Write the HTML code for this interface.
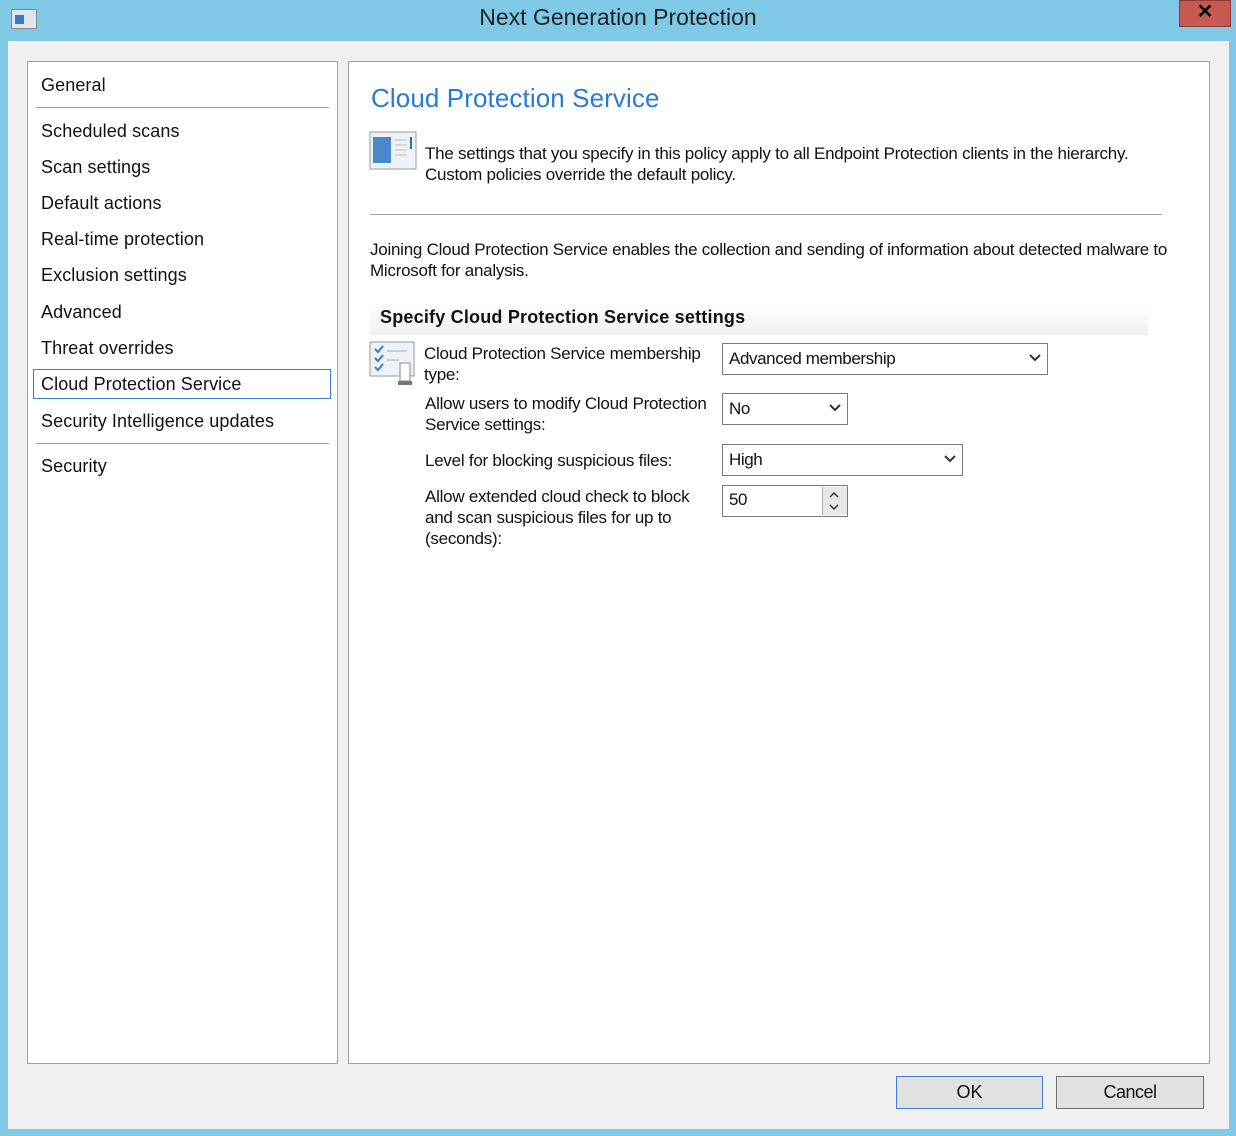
<!DOCTYPE html><html><head><style>
body{margin:0;width:1236px;height:1136px;background:#7fc8e6;font-family:"Liberation Sans",sans-serif;position:relative;overflow:hidden}
.a{position:absolute}
.t{font-size:17px;color:#111;letter-spacing:-0.25px;line-height:21px}
.nav{font-size:18px;color:#111;left:41px;letter-spacing:0.1px}
.dd{position:absolute;background:#fff;border:1px solid #7a7a7a;height:30px;box-sizing:border-box;font-size:17px;letter-spacing:-0.4px;padding:5px 6px;color:#111}
.dd svg{position:absolute;right:6px;top:10px}
</style></head><body>
<div class="a" style="left:11px;top:9px;width:24px;height:18px;border:1px solid #888;background:#dde6ee"><div class="a" style="left:3px;top:5px;width:9px;height:9px;background:#3a78c0"></div></div>
<div class="a" style="left:0;width:1236px;top:4px;text-align:center;font-size:23px;color:#222">Next Generation Protection</div>
<div class="a" style="left:1179px;top:0;width:52px;height:27px;background:#c75a50;border:1px solid #8a3a33;box-sizing:border-box;text-align:center;font-weight:bold;font-size:20px;line-height:22px">✕</div>
<div class="a" style="left:8px;top:41px;width:1221px;height:1088px;background:#f0f0f0"></div>
<div class="a" style="left:27px;top:61px;width:311px;height:1003px;background:#fff;border:1px solid #a0a0a0;box-sizing:border-box"></div>
<div class="a" style="left:348px;top:61px;width:862px;height:1003px;background:#fff;border:1px solid #a0a0a0;box-sizing:border-box"></div>
<div class="a nav" style="top:75px">General</div>
<div class="a" style="left:36px;top:107px;width:293px;height:1px;background:#a0a0a0"></div>
<div class="a nav" style="top:121px">Scheduled scans</div>
<div class="a nav" style="top:157px">Scan settings</div>
<div class="a nav" style="top:193px">Default actions</div>
<div class="a nav" style="top:229px">Real-time protection</div>
<div class="a nav" style="top:265px">Exclusion settings</div>
<div class="a nav" style="top:302px">Advanced</div>
<div class="a nav" style="top:338px">Threat overrides</div>
<div class="a" style="left:33px;top:369px;width:298px;height:30px;border:1px solid #3c7fd0;box-sizing:border-box"></div>
<div class="a nav" style="top:374px">Cloud Protection Service</div>
<div class="a nav" style="top:411px">Security Intelligence updates</div>
<div class="a" style="left:36px;top:443px;width:293px;height:1px;background:#a0a0a0"></div>
<div class="a nav" style="top:456px">Security</div>

<div class="a" style="left:371px;top:83px;font-size:26px;color:#2a7ad4;letter-spacing:0.1px">Cloud Protection Service</div>
<svg class="a" style="left:369px;top:131px" width="48" height="40"><rect x="1" y="1" width="46" height="37" fill="#eef2f6" stroke="#999"/><rect x="4" y="6" width="18" height="26" fill="#4a88cc"/><g stroke="#bbb"><line x1="26" y1="9" x2="38" y2="9"/><line x1="26" y1="14" x2="38" y2="14"/><line x1="26" y1="19" x2="38" y2="19"/><line x1="26" y1="24" x2="38" y2="24"/></g><rect x="41" y="6" width="2" height="12" fill="#2a6ac0"/></svg>
<div class="a t" style="left:425px;top:143px">The settings that you specify in this policy apply to all Endpoint Protection clients in the hierarchy.<br>Custom policies override the default policy.</div>
<div class="a" style="left:370px;top:214px;width:792px;height:1px;background:#a0a0a0"></div>
<div class="a t" style="left:370px;top:239px">Joining Cloud Protection Service enables the collection and sending of information about detected malware to<br>Microsoft for analysis.</div>
<div class="a" style="left:370px;top:303px;width:778px;height:32px;background:linear-gradient(#fff,#f0f0f0)"></div>
<div class="a" style="left:380px;top:307px;font-size:18px;font-weight:bold;letter-spacing:0.2px;color:#111">Specify Cloud Protection Service settings</div>
<svg class="a" style="left:369px;top:341px" width="50" height="46"><rect x="1" y="1" width="44" height="34" fill="#eef2f6" stroke="#999"/><path d="M6 8l3 3 5-6M6 17l3 3 5-6M6 26l3 3 5-6" stroke="#3a7ad0" stroke-width="2" fill="none"/><g stroke="#aaa"><line x1="18" y1="10" x2="38" y2="10"/><line x1="18" y1="19" x2="30" y2="19"/></g><rect x="31" y="22" width="10" height="18" fill="#fff" stroke="#888"/><rect x="29" y="40" width="14" height="4" fill="#777"/></svg>
<div class="a t" style="left:424px;top:343px">Cloud Protection Service membership<br>type:</div>
<div class="a t" style="left:425px;top:393px">Allow users to modify Cloud Protection<br>Service settings:</div>
<div class="a t" style="left:425px;top:450px">Level for blocking suspicious files:</div>
<div class="a t" style="left:425px;top:486px">Allow extended cloud check to block<br>and scan suspicious files for up to<br>(seconds):</div>
<div class="dd" style="left:722px;top:343px;width:326px;height:32px">Advanced membership<svg width="12" height="8"><path d="M1 1l5 5 5-5" stroke="#333" stroke-width="2" fill="none"/></svg></div>
<div class="dd" style="left:722px;top:393px;width:126px;height:32px">No<svg width="12" height="8"><path d="M1 1l5 5 5-5" stroke="#333" stroke-width="2" fill="none"/></svg></div>
<div class="dd" style="left:722px;top:444px;width:241px;height:32px">High<svg width="12" height="8"><path d="M1 1l5 5 5-5" stroke="#333" stroke-width="2" fill="none"/></svg></div>
<div class="dd" style="left:722px;top:485px;width:126px;height:32px;padding-top:4px">50</div>
<div class="a" style="left:822px;top:487px;width:24px;height:28px;background:#e8e8e8;border-left:1px solid #aaa"></div>
<svg class="a" style="left:828px;top:490px" width="12" height="24"><path d="M2 7l4-4 4 4M2 15l4 4 4-4" stroke="#333" stroke-width="1.5" fill="none"/></svg>
<div class="a" style="left:896px;top:1076px;width:147px;height:33px;background:#e1e1e1;border:1px solid #3c7fd0;box-sizing:border-box;text-align:center;font-size:18px;line-height:31px;color:#111">OK</div>
<div class="a" style="left:1056px;top:1076px;width:148px;height:33px;background:#e1e1e1;border:1px solid #707070;box-sizing:border-box;text-align:center;font-size:18px;line-height:31px;color:#111;letter-spacing:-0.5px">Cancel</div>
</body></html>
